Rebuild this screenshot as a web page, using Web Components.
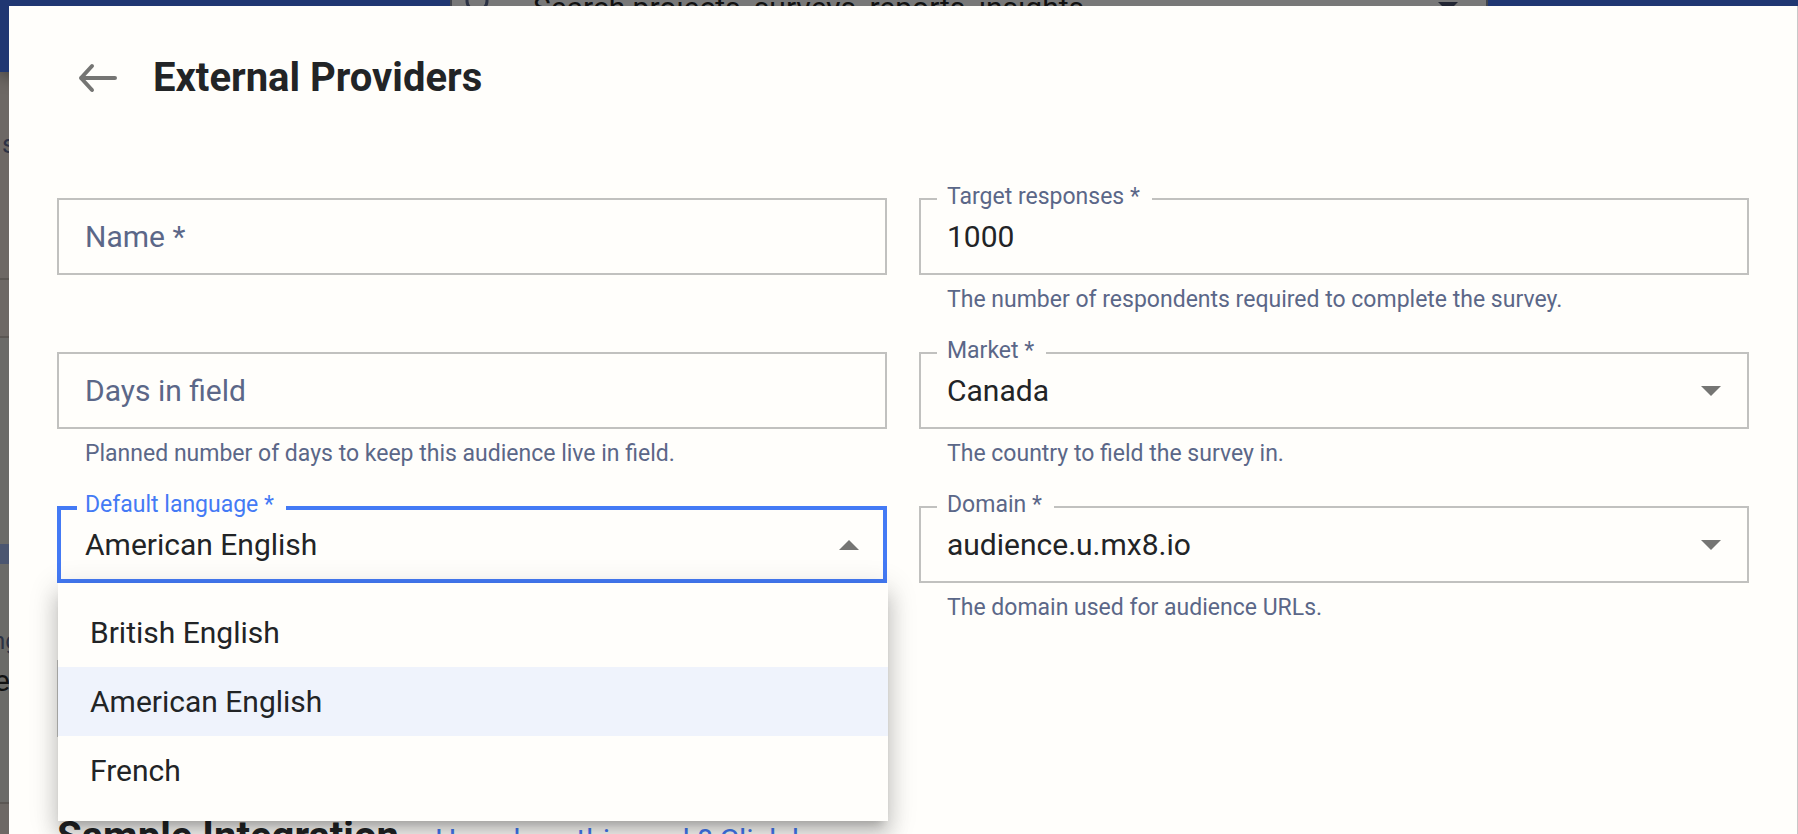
<!DOCTYPE html>
<html lang="en">
<head>
<meta charset="utf-8">
<title>External Providers</title>
<style>
    :root {
        --paper: #fffefb;
        --ink: #222426;
        --muted: #5b6788;
        --line: #c1c1bf;
        --accent: #447af5;
        --selected: #eff3fc;
    }
    body {
        margin: 0;
        height: 100vh;
        overflow: hidden;
        font-family: Roboto, sans-serif;
        color: var(--ink);
    }
</style>
</head>
<body>
<app-backdrop></app-backdrop>
<side-dialog heading="External Providers">
    <ui-field label="Name" required></ui-field>
    <ui-field label="Target responses" required value="1000" helper="The number of respondents required to complete the survey."></ui-field>
    <ui-field label="Days in field" helper="Planned number of days to keep this audience live in field."></ui-field>
    <ui-field label="Market" required value="Canada" options="Canada" helper="The country to field the survey in."></ui-field>
    <ui-field label="Default language" required open value="American English" options="British English|American English|French"></ui-field>
    <ui-field label="Domain" required value="audience.u.mx8.io" options="audience.u.mx8.io" helper="The domain used for audience URLs."></ui-field>
    <ui-field></ui-field>
    <section-title slot="footer" heading="Sample Integration">How does this work? Click here</section-title>
</side-dialog>

<script>
class AppBackdrop extends HTMLElement {
    constructor() {
        super();
        this.attachShadow({ mode: 'open' });
        this.shadowRoot.innerHTML = `
            <style>
                :host {
                    display: flex;
                    flex-direction: column;
                    height: 100vh;
                    overflow: hidden;
                    background: #6b6b68;
                    font-size: 30px;
                }
                header {
                    display: flex;
                    flex: none;
                    justify-content: center;
                    height: 120px;
                    margin-top: -48px;
                    padding-right: 310px;
                    padding-left: 450px;
                    background: #203772;
                    box-shadow: 0 4px 16px rgba(0, 0, 0, 0.4);
                    z-index: 1;
                }
                .search {
                    display: flex;
                    flex: 1;
                    align-items: center;
                    box-sizing: border-box;
                    height: 110px;
                    padding: 0 28px 0 13px;
                    border: 2px solid #42454d;
                    background: #787878;
                    color: #111;
                }
                .search span {
                    flex: 1;
                    padding-left: 30px;
                }
                .summary, .detail, .rest {
                    flex: none;
                    box-sizing: border-box;
                    border-bottom: 2px solid #5b5753;
                    background: #6d6864;
                }
                .summary {
                    height: 208px;
                    padding-top: 54px;
                    color: #2c3244;
                    font-size: 26px;
                }
                .summary p {
                    padding-left: 2px;
                }
                .detail { height: 58px; }
                .rest {
                    height: 466px;
                    background: #6b6b68;
                }
                .band {
                    height: 20px;
                    margin-top: 206px;
                    background: #4b5670;
                }
                p { margin: 0; line-height: 36px; }
                .small { margin-top: 59px; color: #2c3244; font-size: 24px; text-indent: -8px; }
                .big { margin-top: 4px; color: #111; text-indent: -6px; }
                .foot { flex: 1; background: #6d6864; }
            </style>
            <header>
                <div class="search">
                    <svg width="38" height="38" viewBox="0 0 38 38" fill="none" stroke="#2c3244" stroke-width="3"><circle cx="12" cy="13" r="10"/><path d="M19 21l12 12"/></svg>
                    <span>Search projects, surveys, reports, insights</span>
                    <svg width="20" height="10" viewBox="0 0 20 10" fill="#222633"><path d="M0 0h20L10 10z"/></svg>
                </div>
            </header>
            <div class="summary"><p>s</p></div>
            <div class="detail"></div>
            <div class="rest">
                <div class="band"></div>
                <p class="small">ng</p>
                <p class="big">e</p>
            </div>
            <div class="foot"></div>
        `;
    }
}

class SideDialog extends HTMLElement {
    constructor() {
        super();
        this.attachShadow({ mode: 'open' });
        this.shadowRoot.innerHTML = `
            <style>
                :host {
                    position: fixed;
                    inset: 6px 0 0 9px;
                    z-index: 2;
                    overflow: hidden;
                    padding: 48px 48px 0;
                    border-right: 1px solid #c8c8c8;
                    background: var(--paper);
                }
                header {
                    display: flex;
                    align-items: center;
                    gap: 14px;
                    margin-bottom: 96px;
                }
                button {
                    display: flex;
                    justify-content: center;
                    width: 82px;
                    padding: 0;
                    border: 0;
                    background: none;
                }
                h1 {
                    margin: 0;
                    font-size: 40px;
                    font-weight: 700;
                    line-height: 48px;
                }
                .grid {
                    display: grid;
                    grid-template-columns: 1fr 1fr;
                    gap: 38px 32px;
                    margin-bottom: 37px;
                }
            </style>
            <header>
                <button type="button" aria-label="Back">
                    <svg width="40" height="30" viewBox="0 0 40 30" fill="none" stroke="#757573" stroke-width="4" stroke-linecap="round" stroke-linejoin="round"><path d="M37 15H3M14 3L3 15l11 12"/></svg>
                </button>
                <h1></h1>
            </header>
            <div class="grid"><slot></slot></div>
            <slot name="footer"></slot>
        `;
    }

    connectedCallback() {
        this.shadowRoot.querySelector('h1').textContent = this.getAttribute('heading');
    }
}

class UiField extends HTMLElement {
    constructor() {
        super();
        this.attachShadow({ mode: 'open' });
    }

    connectedCallback() {
        const value = this.getAttribute('value') || '';
        const options = this.getAttribute('options');
        const open = this.hasAttribute('open');
        const name = this.getAttribute('label') || '';
        const label = name + (this.hasAttribute('required') ? ' *' : '');

        this.shadowRoot.innerHTML = `
            <style>
                :host {
                    display: block;
                    min-width: 0;
                }
                .box {
                    position: relative;
                    display: grid;
                    align-items: center;
                    box-sizing: border-box;
                    height: 77px;
                    border: 2px solid var(--line);
                }
                .box > * { grid-area: 1 / 1; }
                input, select {
                    box-sizing: border-box;
                    width: 100%;
                    height: 73px;
                    padding: 0 26px;
                    border: 0;
                    outline: 0;
                    appearance: none;
                    background: none;
                    color: var(--ink);
                    font: 30px Roboto, sans-serif;
                }
                label {
                    padding: 0 26px;
                    color: var(--muted);
                    font-size: 30px;
                    line-height: 38px;
                    pointer-events: none;
                }
                .filled label {
                    position: absolute;
                    top: -15px;
                    left: 16px;
                    padding: 0 12px 0 10px;
                    background: var(--paper);
                    font-size: 23px;
                    line-height: 24px;
                }
                .caret {
                    justify-self: end;
                    margin-right: 26px;
                    fill: #757573;
                    pointer-events: none;
                }
                .open {
                    border-color: var(--accent);
                    box-shadow: inset 0 0 0 2px var(--accent);
                }
                .filled.open label {
                    left: 18px;
                    padding-left: 8px;
                    color: var(--accent);
                }
                .open .caret {
                    transform: rotate(180deg);
                }
                .helper {
                    min-height: 28px;
                    margin: 11px 28px 0;
                    color: var(--muted);
                    font-size: 23px;
                    line-height: 28px;
                }
                .menu {
                    position: absolute;
                    top: 75px;
                    left: -1px;
                    z-index: 1;
                    width: calc(100% + 4px);
                    box-sizing: border-box;
                    margin: 0;
                    padding: 15px 0 16px;
                    background: var(--paper);
                    box-shadow: 0 9px 9px -6px rgba(0, 0, 0, 0.2), 0 15px 19px 2px rgba(0, 0, 0, 0.14), 0 6px 26px 4px rgba(0, 0, 0, 0.12);
                    list-style: none;
                    font-size: 30px;
                    line-height: 69px;
                }
                .menu li { padding: 0 32px; }
                .menu [aria-selected=true] { background: var(--selected); }
            </style>
            <div class="box">
                <label for="control"></label>
            </div>
            <p class="helper"></p>
        `;

        const box = this.shadowRoot.querySelector('.box');
        const control = document.createElement(options ? 'select' : 'input');
        control.id = 'control';
        if (options) {
            options.split('|').forEach(text => control.add(new Option(text, text)));
        }
        control.value = value;
        box.prepend(control);
        box.classList.toggle('filled', value !== '');
        box.classList.toggle('open', open);
        this.shadowRoot.querySelector('label').textContent = label;
        this.shadowRoot.querySelector('.helper').textContent = this.getAttribute('helper') || '';

        if (options) {
            box.insertAdjacentHTML('beforeend', '<svg class="caret" width="20" height="10" viewBox="0 0 20 10"><path d="M0 0h20L10 10z"/></svg>');
        }
        if (open) {
            const menu = document.createElement('ul');
            menu.className = 'menu';
            menu.setAttribute('role', 'listbox');
            options.split('|').forEach(text => {
                const item = document.createElement('li');
                item.setAttribute('role', 'option');
                item.setAttribute('aria-selected', text === value);
                item.textContent = text;
                menu.append(item);
            });
            box.append(menu);
        }
    }
}

class SectionTitle extends HTMLElement {
    constructor() {
        super();
        this.attachShadow({ mode: 'open' });
        this.shadowRoot.innerHTML = `
            <style>
                :host {
                    display: flex;
                    align-items: baseline;
                    gap: 36px;
                }
                h2 {
                    margin: 0;
                    font-size: 40px;
                    font-weight: 700;
                    line-height: 48px;
                }
                a {
                    color: var(--accent);
                    font-size: 30px;
                    text-decoration: none;
                }
            </style>
            <h2></h2>
            <a href="#"><slot></slot></a>
        `;
    }

    connectedCallback() {
        this.shadowRoot.querySelector('h2').textContent = this.getAttribute('heading');
    }
}

customElements.define('app-backdrop', AppBackdrop);
customElements.define('side-dialog', SideDialog);
customElements.define('ui-field', UiField);
customElements.define('section-title', SectionTitle);
</script>
</body>
</html>
